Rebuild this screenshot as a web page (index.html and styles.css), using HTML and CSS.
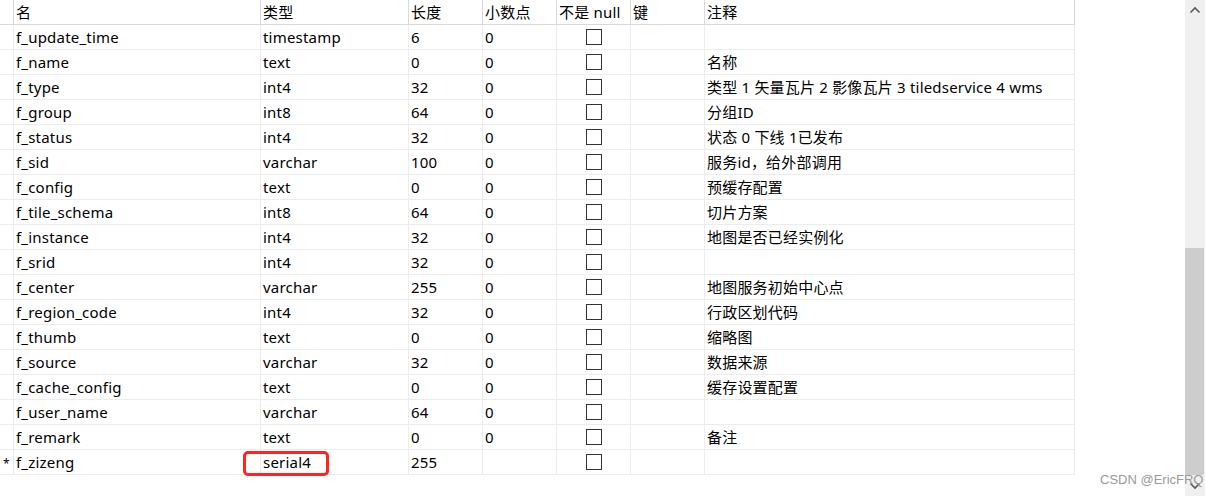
FILE: index.html
```html
<!DOCTYPE html>
<html lang="zh">
<head>
<meta charset="utf-8">
<title>表设计</title>
<link rel="stylesheet" href="styles.css">
</head>
<body>
<div class="page">
  <div class="main">
    <div class="grid">
      <div class="c h ind"></div><div class="c h">名</div><div class="c h">类型</div><div class="c h">长度</div><div class="c h">小数点</div><div class="c h">不是 null</div><div class="c h">键</div><div class="c h">注释</div>

      <div class="c ind"></div><div class="c">f_update_time</div><div class="c">timestamp</div><div class="c">6</div><div class="c">0</div><div class="c chk"><span class="box"></span></div><div class="c"></div><div class="c"></div>
      <div class="c ind"></div><div class="c">f_name</div><div class="c">text</div><div class="c">0</div><div class="c">0</div><div class="c chk"><span class="box"></span></div><div class="c"></div><div class="c">名称</div>
      <div class="c ind"></div><div class="c">f_type</div><div class="c">int4</div><div class="c">32</div><div class="c">0</div><div class="c chk"><span class="box"></span></div><div class="c"></div><div class="c">类型 1 矢量瓦片 2 影像瓦片 3 tiledservice 4 wms</div>
      <div class="c ind"></div><div class="c">f_group</div><div class="c">int8</div><div class="c">64</div><div class="c">0</div><div class="c chk"><span class="box"></span></div><div class="c"></div><div class="c">分组ID</div>
      <div class="c ind"></div><div class="c">f_status</div><div class="c">int4</div><div class="c">32</div><div class="c">0</div><div class="c chk"><span class="box"></span></div><div class="c"></div><div class="c">状态 0 下线 1已发布</div>
      <div class="c ind"></div><div class="c">f_sid</div><div class="c">varchar</div><div class="c">100</div><div class="c">0</div><div class="c chk"><span class="box"></span></div><div class="c"></div><div class="c">服务id，给外部调用</div>
      <div class="c ind"></div><div class="c">f_config</div><div class="c">text</div><div class="c">0</div><div class="c">0</div><div class="c chk"><span class="box"></span></div><div class="c"></div><div class="c">预缓存配置</div>
      <div class="c ind"></div><div class="c">f_tile_schema</div><div class="c">int8</div><div class="c">64</div><div class="c">0</div><div class="c chk"><span class="box"></span></div><div class="c"></div><div class="c">切片方案</div>
      <div class="c ind"></div><div class="c">f_instance</div><div class="c">int4</div><div class="c">32</div><div class="c">0</div><div class="c chk"><span class="box"></span></div><div class="c"></div><div class="c">地图是否已经实例化</div>
      <div class="c ind"></div><div class="c">f_srid</div><div class="c">int4</div><div class="c">32</div><div class="c">0</div><div class="c chk"><span class="box"></span></div><div class="c"></div><div class="c"></div>
      <div class="c ind"></div><div class="c">f_center</div><div class="c">varchar</div><div class="c">255</div><div class="c">0</div><div class="c chk"><span class="box"></span></div><div class="c"></div><div class="c">地图服务初始中心点</div>
      <div class="c ind"></div><div class="c">f_region_code</div><div class="c">int4</div><div class="c">32</div><div class="c">0</div><div class="c chk"><span class="box"></span></div><div class="c"></div><div class="c">行政区划代码</div>
      <div class="c ind"></div><div class="c">f_thumb</div><div class="c">text</div><div class="c">0</div><div class="c">0</div><div class="c chk"><span class="box"></span></div><div class="c"></div><div class="c">缩略图</div>
      <div class="c ind"></div><div class="c">f_source</div><div class="c">varchar</div><div class="c">32</div><div class="c">0</div><div class="c chk"><span class="box"></span></div><div class="c"></div><div class="c">数据来源</div>
      <div class="c ind"></div><div class="c">f_cache_config</div><div class="c">text</div><div class="c">0</div><div class="c">0</div><div class="c chk"><span class="box"></span></div><div class="c"></div><div class="c">缓存设置配置</div>
      <div class="c ind"></div><div class="c">f_user_name</div><div class="c">varchar</div><div class="c">64</div><div class="c">0</div><div class="c chk"><span class="box"></span></div><div class="c"></div><div class="c"></div>
      <div class="c ind"></div><div class="c">f_remark</div><div class="c">text</div><div class="c">0</div><div class="c">0</div><div class="c chk"><span class="box"></span></div><div class="c"></div><div class="c">备注</div>
      <div class="c ind star">*</div><div class="c">f_zizeng</div><div class="c mark">serial4<span class="redbox"></span></div><div class="c">255</div><div class="c"></div><div class="c chk"><span class="box"></span></div><div class="c"></div><div class="c"></div>
    </div>
  </div>
  <div class="scrollbar">
    <div class="sb-btn sb-up">
      <svg width="12" height="8" viewBox="0 0 12 8"><path d="M1.5 6.5 L6 2 L10.5 6.5" fill="none" stroke="#5a5a5a" stroke-width="1.6"/></svg>
    </div>
    <div class="sb-space"></div>
    <div class="sb-thumb"></div>
    <div class="sb-btn sb-down">
      <svg width="12" height="8" viewBox="0 0 12 8"><path d="M1.5 1.5 L6 6 L10.5 1.5" fill="none" stroke="#5a5a5a" stroke-width="1.6"/></svg>
    </div>
  </div>
  <div class="watermark">CSDN @EricFRQ</div>
</div>
</body>
</html>
```

FILE: styles.css
```css
html, body {
  margin: 0;
  padding: 0;
  background: #fff;
}
body {
  width: 1205px;
  height: 496px;
  overflow: hidden;
  font-family: "Noto Sans", "Noto Sans CJK SC", sans-serif;
  font-size: 15px;
  letter-spacing: 0.2px;
  color: #000;
}
.page {
  position: relative;
  display: flex;
  width: 1205px;
  height: 496px;
}
.main {
  flex: 1;
}
.grid {
  display: grid;
  grid-template-columns: 14px 247px 148px 74px 74px 74px 74px 370px;
  grid-auto-rows: 25px;
  width: 1075px;
}
.c {
  box-sizing: border-box;
  border-right: 1px solid #ececec;
  border-bottom: 1px solid #ececec;
  padding-left: 2px;
  line-height: 24px;
  white-space: nowrap;
  overflow: visible;
}
.c.h {
  border-right-color: #d9d9d9;
  border-bottom-color: #d9d9d9;
}
.ind {
  padding-left: 0;
}
.star {
  font-size: 12px;
  text-align: center;
  padding-top: 2px;
}
.chk {
  display: flex;
  justify-content: center;
  align-items: flex-start;
  padding-left: 0;
  padding-top: 4px;
}
.box {
  display: block;
  width: 16px;
  height: 16px;
  box-sizing: border-box;
  border: 1px solid #333;
  background: #fff;
}
.mark {
  position: relative;
}
.redbox {
  position: absolute;
  left: -18px;
  top: 1px;
  width: 86px;
  height: 25px;
  box-sizing: border-box;
  border: 3px solid #ff2424;
  border-radius: 5px;
}
.scrollbar {
  width: 20px;
  height: 496px;
  background: #f0f0f0;
  display: flex;
  flex-direction: column;
}
.sb-btn {
  display: flex;
  align-items: center;
  justify-content: center;
}
.sb-up {
  height: 20px;
  padding-right: 1px;
}
.sb-space {
  height: 228px;
}
.sb-thumb {
  height: 227px;
  width: 19px;
  background: #cdcdcd;
}
.sb-down {
  height: 21px;
  padding-right: 1px;
}
.watermark {
  position: absolute;
  left: 1100px;
  top: 472px;
  font-family: "Liberation Sans", "DejaVu Sans", sans-serif;
  font-size: 13px;
  letter-spacing: 0;
  color: #999;
  white-space: nowrap;
}
```
